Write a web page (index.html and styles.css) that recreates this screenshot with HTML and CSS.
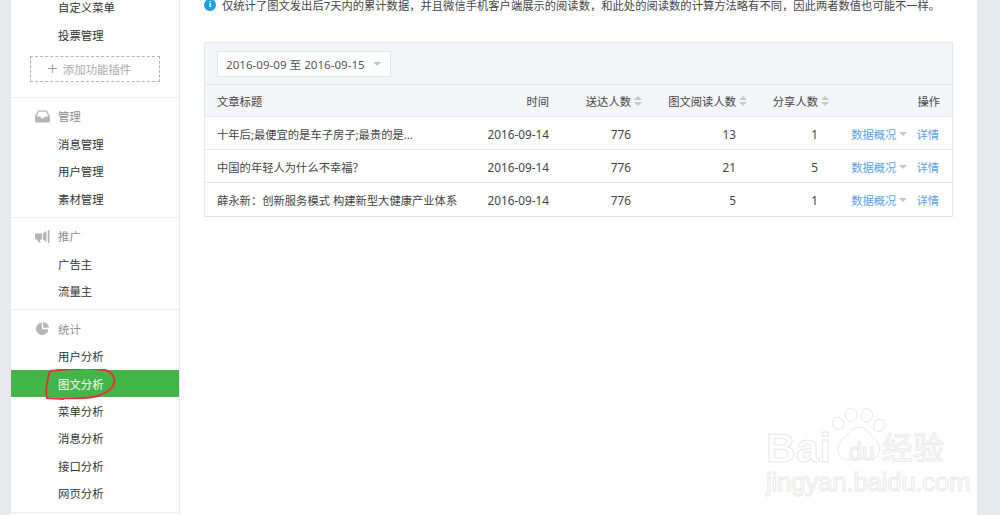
FILE: index.html
```
<!DOCTYPE html>
<html lang="zh-CN">
<head>
<meta charset="utf-8">
<title>图文分析</title>
<link rel="stylesheet" href="styles.css">
</head>
<body>
<div class="page">
  <aside class="sidebar">
    <section class="group first">
      <a class="item">自定义菜单</a>
      <a class="item">投票管理</a>
      <div class="add"><span class="plus">+</span>添加功能插件</div>
    </section>
    <section class="group g2">
      <div class="head">
        <svg class="ico" viewBox="0 0 15 12"><path d="M3 0h9l3 6v4.500a1.500 1.500 0 0 1-1.500 1.500h-12A1.500 1.500 0 0 1 0 10.500V6zM3.800 1.300 1.600 6h3.700l1 1.700h2.400l1-1.700h3.700l-2.200-4.700z"/></svg>
        管理</div>
      <a class="item">消息管理</a>
      <a class="item">用户管理</a>
      <a class="item">素材管理</a>
    </section>
    <section class="group g3">
      <div class="head">
        <svg class="ico" viewBox="0 0 15 13"><path d="M0 3.500h7v6H4.800l.9 3H3.400l-1-3H0zM8 3.500 11.500.8v11.400L8 9.500zM13 0h1.500v13H13q-.6-6.500 0-13z"/></svg>
        推广</div>
      <a class="item">广告主</a>
      <a class="item">流量主</a>
    </section>
    <section class="group g4">
      <div class="head">
        <svg class="ico" viewBox="0 0 14 14"><path d="M6.300.6v7.100h7.100A6.700 6.700 0 1 1 6.300.6zM7.700 0A6.400 6.400 0 0 1 14 6.300H7.700z"/></svg>
        统计</div>
      <a class="item">用户分析</a>
      <a class="item active">图文分析</a>
      <a class="item">菜单分析</a>
      <a class="item">消息分析</a>
      <a class="item">接口分析</a>
      <a class="item">网页分析</a>
    </section>
  </aside>

  <main class="main">
    <p class="notice"><span class="info">i</span>仅统计了图文发出后7天内的累计数据，并且微信手机客户端展示的阅读数，和此处的阅读数的计算方法略有不同，因此两者数值也可能不一样。</p>
    <div class="panel">
      <div class="toolbar">
        <div class="range">2016-09-09 至 2016-09-15<i class="caret"></i></div>
      </div>
      <div class="row header">
        <div>文章标题</div>
        <div class="r">时间</div>
        <div class="r num">送达人数<i class="sort"></i></div>
        <div class="r num">图文阅读人数<i class="sort"></i></div>
        <div class="r num">分享人数<i class="sort"></i></div>
        <div class="r">操作</div>
      </div>
      <div class="row">
        <div>十年后;最便宜的是车子房子;最贵的是...</div>
        <div class="r val">2016-09-14</div>
        <div class="r num val">776</div>
        <div class="r num val">13</div>
        <div class="r num val">1</div>
        <div class="r ops"><a>数据概况</a><i class="caret small"></i><a>详情</a></div>
      </div>
      <div class="row">
        <div>中国的年轻人为什么不幸福<span class="qm">？</span></div>
        <div class="r val">2016-09-14</div>
        <div class="r num val">776</div>
        <div class="r num val">21</div>
        <div class="r num val">5</div>
        <div class="r ops"><a>数据概况</a><i class="caret small"></i><a>详情</a></div>
      </div>
      <div class="row">
        <div>薛永新：创新服务模式 构建新型大健康产业体系</div>
        <div class="r val">2016-09-14</div>
        <div class="r num val">776</div>
        <div class="r num val">5</div>
        <div class="r num val">1</div>
        <div class="r ops"><a>数据概况</a><i class="caret small"></i><a>详情</a></div>
      </div>
    </div>
  </main>
  <div class="gutter"></div>
</div>

<svg class="scribble" viewBox="0 0 80 36"><path d="M6 2C24 0 48-1 61 1 70 4 72 11 69 17 65 23 57 26 50 28 38 30 20 29 3 29 1 22 3 12 6 2M3 29 20 30"/></svg>

<div class="mark">
  <svg class="paw" viewBox="0 0 60 62"><g><ellipse cx="6.500" cy="16" rx="5.500" ry="6.500" transform="rotate(-25 6.500 16)"/><ellipse cx="20" cy="7" rx="6" ry="7"/><ellipse cx="36" cy="7.500" rx="6" ry="7"/><ellipse cx="49" cy="18" rx="5.500" ry="6.500" transform="rotate(25 49 18)"/><path d="M28 20c8 0 11 8 16 12 7 5 7 16 0 20-6 3-11 0-16 0s-11 3-17 0c-7-4-6-15 0-20 5-4 9-12 17-12z"/></g></svg>
  <span class="m-bai">Bai</span>
  <span class="m-du">du</span>
  <span class="m-jy">经验</span>
  <span class="m-url">jingyan.baidu.com</span>
</div>
</body>
</html>
```
FILE: styles.css
```
* { box-sizing: border-box; }
html, body { margin: 0; height: 515px; overflow: hidden; }
body {
  font-family: "Noto Sans", "Noto Sans CJK SC", sans-serif;
  font-size: 11.4px;
  color: #444;
  background: #fff;
}
.page { display: flex; height: 515px; padding-left: 11px; background: #e7e8eb; overflow: hidden; }

.sidebar { width: 169px; flex: none; background: #fff; border-right: 1px solid #e7e7eb; }
.group { border-bottom: 1px solid #eceef0; }
.group.first { margin-top: -6.200px; height: 104.200px; }
.group.g2 { padding-top: 5px; height: 120px; }
.group.g3 { padding-top: 5px; height: 92px; }
.group.g4 { padding-top: 5.300px; height: 203px; }

.item, .head { display: flex; align-items: center; height: 27.33px; padding-left: 47px; color: #333; }
.head { position: relative; color: #8d8d8d; padding-bottom: 1.500px; }
.g4 .head { padding-bottom: 0; }
.ico { position: absolute; left: 24px; top: 7px; width: 15px; height: 13px; fill: #b5b5b5; }
.item.active { background: #44b549; color: #fff; }

.add {
  display: flex; align-items: center;
  width: 130px; height: 26px; margin: 7.200px 0 0 19px; padding-left: 16px;
  border: 1px dashed #b4b4b4; color: #a8a8a8;
}
.plus { font-size: 19px; font-weight: 300; line-height: 1; margin-right: 5px; color: #999; }

.main { width: 797px; flex: none; background: #fff; padding: 0 24px 0 24px; }
.notice { display: flex; align-items: center; height: 11px; margin: 0 0 31px; font-size: 11.300px; line-height: 1; white-space: nowrap; color: #444; }
.info {
  flex: none; display: flex; align-items: center; justify-content: center;
  width: 12px; height: 12px; margin: -2px 6px 0 0; border-radius: 50%;
  background: #1e9de8; color: #fff; font: bold 9px/1 "Liberation Serif", serif;
}

.panel { width: 749px; border: 1px solid #e7e7eb; border-bottom-color: #e2e3e7; background: #fff; }
.toolbar { height: 42px; padding: 8px 12px; background: #f4f5f9; border-bottom: 1px solid #e7e7eb; }
.range {
  display: flex; align-items: center; width: 174px; height: 26px; padding-left: 8px;
  background: #fff; border: 1px solid #e7e7eb; font-size: 11.600px; color: #555; white-space: nowrap;
}
.caret { display: block; width: 0; height: 0; margin-left: 8px; border: 4px solid transparent; border-top: 4px solid #c4c4c4; border-bottom: 0; }

.row {
  display: grid;
  grid-template-columns: 243px 89px 93px 105px 82px 111px;
  align-items: center;
  height: 33px; padding: 1px 12px 0;
  border-bottom: 1px solid #e7e7eb;
  font-size: 11.300px;
  white-space: nowrap;
}
.row:last-child { border-bottom: 0; padding-top: 0; }
.row.header { height: 32px; padding-top: 0; background: #f4f5f9; }
.r { text-align: right; }
.val { font-size: 11.800px; }
.qm { font-family: "Noto Sans CJK TC", sans-serif; }
.num { position: relative; padding-right: 11px; }
.sort { position: absolute; right: 0; top: 50%; margin-top: -5px; width: 8px; height: 10px; }
.sort::before, .sort::after { content: ""; position: absolute; left: 0; border: 4px solid transparent; }
.sort::before { top: -4px; border-bottom-color: #c8c8c8; }
.sort::after { bottom: -4px; border-top-color: #c8c8c8; }

.ops { display: flex; align-items: center; justify-content: flex-end; padding-right: 1px; color: #5a9fe6; }
.ops a { color: #5a9fe6; }
.caret.small { margin: 0 9px 0 3px; }

.gutter { flex: 1; background: #e7e8eb; }

.scribble {
  position: absolute; left: 44px; top: 369px; width: 80px; height: 36px;
  fill: none; stroke: #e8303a; stroke-width: 2;
}

.mark { position: absolute; left: 760px; top: 405px; width: 195px; height: 95px; color: #fff; -webkit-text-stroke: 1px #e9e9e9; }
.mark span { position: absolute; white-space: nowrap; line-height: 1; }
.paw { position: absolute; left: 71px; top: 3px; width: 60px; height: 60px; fill: #fff; stroke: #e6e6e6; stroke-width: 1; }
.m-bai { left: 6px; top: 23px; font: bold 41px/1 "Liberation Sans", sans-serif; letter-spacing: 0.500px; }
.m-du { left: 89px; top: 36px; font: 23px/1 "Liberation Sans", sans-serif; }
.m-jy { left: 122px; top: 25px; font: 31px/1 "Noto Sans CJK SC", sans-serif; }
.m-url { left: 6px; top: 64px; font: 26px/1 "Liberation Sans", sans-serif; letter-spacing: -0.300px; }
```
